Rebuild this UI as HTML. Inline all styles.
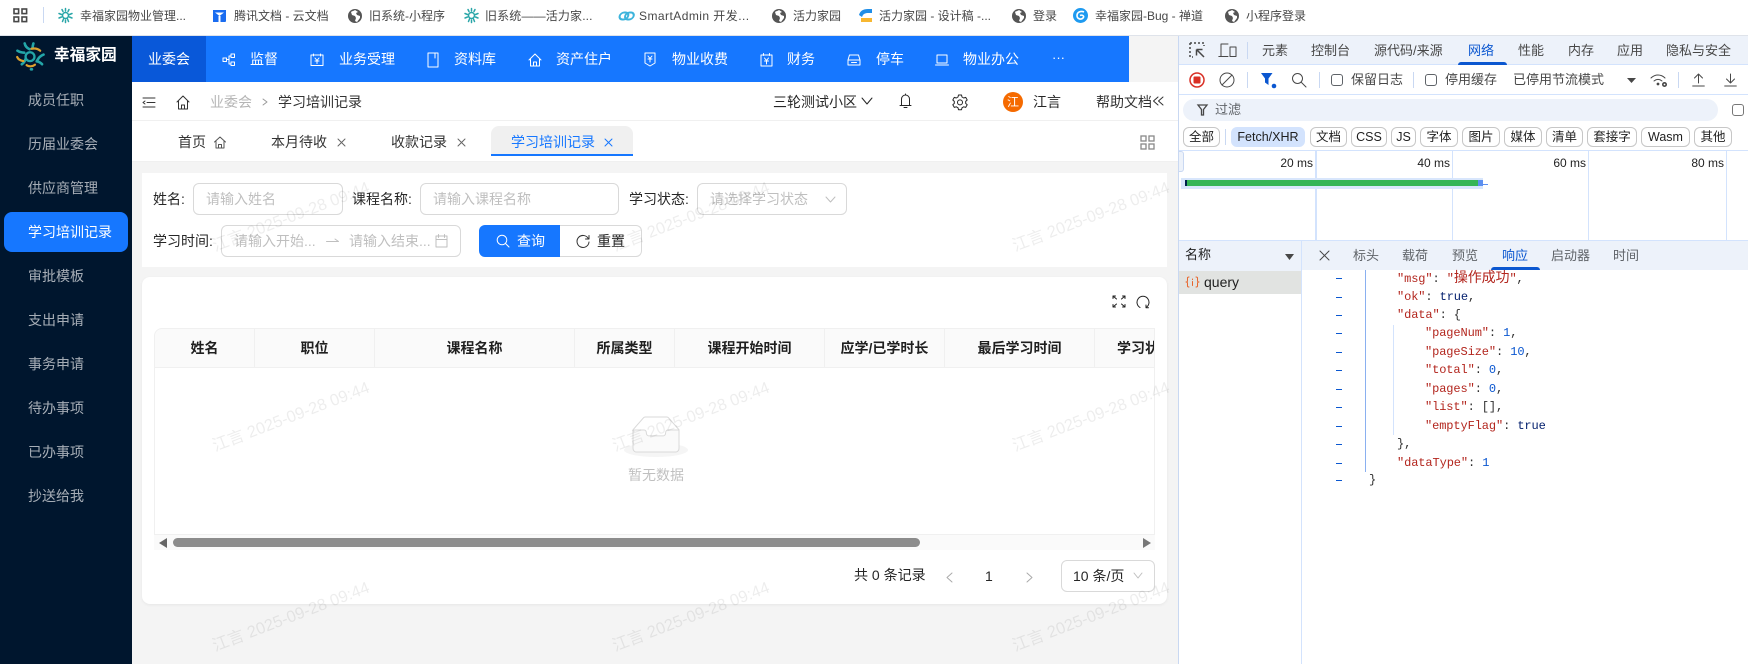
<!DOCTYPE html>
<html lang="zh-CN"><head><meta charset="utf-8"><title>学习培训记录</title>
<style>
*{box-sizing:border-box}
html,body{margin:0;padding:0;width:1748px;height:664px;overflow:hidden;background:#fff;font-family:"Liberation Sans","Noto Sans CJK SC",sans-serif;font-size:14px;color:#333}
.a{position:absolute}
.t{position:absolute;white-space:nowrap;line-height:20px;height:20px}
.b{font-size:12px;color:#474747;top:6px}
svg{position:absolute;display:block;overflow:visible}
.s{fill:none;stroke:currentColor;stroke-width:1;stroke-linecap:round;stroke-linejoin:round}
.m{color:rgba(255,255,255,.65);left:28px}
.n{color:#fff}
.in{position:absolute;height:32px;border:1px solid #d9d9d9;border-radius:6px;background:#fff}
.ph{color:#bfbfbf}
.th{position:absolute;top:0;height:39px;line-height:39px;text-align:center;font-weight:700;color:#1f1f1f;border-right:1px solid #f0f0f0;white-space:nowrap}
.wm{position:absolute;transform:translate(-50%,-50%) rotate(-21deg);font-size:16.4px;color:rgba(0,0,0,.07);white-space:nowrap;line-height:20px;pointer-events:none}
.dt{font-size:13px;color:#474747;top:41px}
.ck{position:absolute;top:74px;width:12px;height:12px;border:1px solid #5f6368;border-radius:3px;background:#fff}
.vs{position:absolute;width:1px;background:#c9d8f2}
.chip{position:absolute;top:127px;height:20px;border:1px solid #c7c7c7;border-radius:6px;text-align:center;line-height:18px;font-size:12.5px;color:#1f1f1f;white-space:nowrap}
.gl{position:absolute;top:151px;height:89px;background:#d3e3fd}
.ms{position:absolute;top:153px;font-size:12px;line-height:20px;color:#1f1f1f;white-space:nowrap;text-align:right}
.g{position:absolute;left:1336px;width:6px;height:1px;border-top:1.5px solid #0b57d0}
.c{position:absolute;font-family:"Liberation Mono","Noto Sans CJK SC",monospace;font-size:12px;letter-spacing:-.1px;line-height:18px;height:18px;white-space:pre;color:#303030}
.c i{font-style:normal;color:#b3261e}.c u{text-decoration:none;color:#0b57d0}.c b{font-weight:400;color:#001d6c}
</style></head><body>

<!-- bookmarks bar -->
<div class="a" style="left:0;top:0;width:1748px;height:36px;background:#fff;border-bottom:1px solid #dfe3ea"></div>
<svg style="left:13px;top:8px" width="15" height="15" viewBox="0 0 15 15"><g fill="none" stroke="#474747" stroke-width="1.6"><rect x="1" y="1" width="4.6" height="4.6"/><rect x="9" y="1" width="4.6" height="4.6"/><rect x="1" y="9" width="4.6" height="4.6"/><rect x="9" y="9" width="4.6" height="4.6"/></g></svg>
<div class="a" style="left:43px;top:7px;width:1px;height:16px;background:#c9d8f2"></div>

<svg style="left:58px;top:8px" width="15" height="15" viewBox="0 0 30 30"><g fill="none" stroke="#2aa6a8" stroke-width="3" stroke-linecap="round"><circle cx="15" cy="15" r="6"/><path d="M15 1v5M8 3l2 4M22 3l-2 4M2 11l5 2M28 11l-5 2M2 20l5-2M28 20l-5-2M9 27l2-5M21 27l-2-5M15 24v5"/></g></svg>
<div class="t b" style="left:80px">幸福家园物业管理...</div>

<svg style="left:212px;top:8px" width="15" height="15" viewBox="0 0 15 15"><path d="M1 2h13v11a1 1 0 0 1-1 1H1z" fill="#1a6cf0"/><path d="M3 4.500h9L7.500 8zM6.500 8h2v6h-2z" fill="#fff"/></svg>
<div class="t b" style="left:234px">腾讯文档 - 云文档</div>

<svg style="left:348px;top:9px" width="14" height="14" viewBox="0 0 14 14"><circle cx="7" cy="7" r="7" fill="#555"/><path d="M7 1c-1 1-3 1-4 2l1 3 3 1 1 2-1 3 2 1 3-4V7L9 6 8 4l2-1z" fill="#fff"/></svg>
<div class="t b" style="left:369px">旧系统-小程序</div>

<svg style="left:464px;top:8px" width="15" height="15" viewBox="0 0 30 30"><g fill="none" stroke="#2aa6a8" stroke-width="3" stroke-linecap="round"><circle cx="15" cy="15" r="6"/><path d="M15 1v5M8 3l2 4M22 3l-2 4M2 11l5 2M28 11l-5 2M2 20l5-2M28 20l-5-2M9 27l2-5M21 27l-2-5M15 24v5"/></g></svg>
<div class="t b" style="left:485px;letter-spacing:.15px">旧系统——活力家...</div>

<svg style="left:618px;top:11px" width="16" height="10" viewBox="0 0 16 10"><g fill="none" stroke="#3db4dc" stroke-width="2"><rect x="1" y="1.500" width="8.500" height="7" rx="3.500" transform="skewX(-15) translate(2 0)"/><rect x="6.500" y="1.500" width="8.500" height="7" rx="3.500" transform="skewX(-15) translate(2 0)"/></g></svg>
<div class="t b" style="left:639px;letter-spacing:.45px">SmartAdmin 开发...</div>

<svg style="left:772px;top:9px" width="14" height="14" viewBox="0 0 14 14"><circle cx="7" cy="7" r="7" fill="#555"/><path d="M7 1c-1 1-3 1-4 2l1 3 3 1 1 2-1 3 2 1 3-4V7L9 6 8 4l2-1z" fill="#fff"/></svg>
<div class="t b" style="left:793px">活力家园</div>

<svg style="left:859px;top:9px" width="13" height="13" viewBox="0 0 13 13"><path d="M0 6C1 2 4 0 9 0h4v4H9C6 4 4 5 3 8z" fill="#1f8ee8"/><path d="M2 9h11v4H2z" fill="#f7b731"/></svg>
<div class="t b" style="left:879px">活力家园 - 设计稿 -...</div>

<svg style="left:1012px;top:9px" width="14" height="14" viewBox="0 0 14 14"><circle cx="7" cy="7" r="7" fill="#555"/><path d="M7 1c-1 1-3 1-4 2l1 3 3 1 1 2-1 3 2 1 3-4V7L9 6 8 4l2-1z" fill="#fff"/></svg>
<div class="t b" style="left:1033px">登录</div>

<svg style="left:1073px;top:8px" width="15" height="15" viewBox="0 0 15 15"><circle cx="7.500" cy="7.500" r="7.500" fill="#1e9af0"/><path d="M11 4C8 2.500 4 4 4 7.500S8 12 10 10 9 6.500 7 7.500" fill="none" stroke="#fff" stroke-width="1.600"/></svg>
<div class="t b" style="left:1095px">幸福家园-Bug - 禅道</div>

<svg style="left:1225px;top:9px" width="14" height="14" viewBox="0 0 14 14"><circle cx="7" cy="7" r="7" fill="#555"/><path d="M7 1c-1 1-3 1-4 2l1 3 3 1 1 2-1 3 2 1 3-4V7L9 6 8 4l2-1z" fill="#fff"/></svg>
<div class="t b" style="left:1246px">小程序登录</div>

<!-- page background -->
<div class="a" style="left:132px;top:36px;width:1046px;height:628px;background:#f4f4f4"></div>

<!-- sidebar -->
<div class="a" style="left:0;top:36px;width:132px;height:628px;background:#00162e"></div>
<svg style="left:16px;top:42px" width="29" height="29" viewBox="0 0 30 30"><g fill="none" stroke-linecap="round"><circle cx="14.500" cy="15.200" r="4.600" stroke="#23a6a8" stroke-width="2.400"/><path d="M9 1.500c.5 2.500 2 4.500 5 6M18 1.500c-.5 1.500-.8 3-.8 4.500M1.500 9c2 1.300 4.500 2 7 2M28.500 13c-2.500 1-5 3-6.500 6M6 23c1.500-1 3-2.500 3.600-5M27 23c-1.500-1.500-3.500-2.800-5.600-3M15.500 28.200h1" stroke="#23a6a8" stroke-width="2.700"/><path d="M16 7c3.500-.7 6.800 0 9 2M1.200 15.500c1 2.200 3.500 3.800 6.400 4.200M11 24c2.500 1.700 6 1.500 8.600-.5" stroke="#dca12f" stroke-width="2.300"/></g></svg>
<div class="t" style="left:54px;top:46px;font-size:15.700px;font-weight:700;color:#fff">幸福家园</div>
<div class="a" style="left:4px;top:212px;width:124px;height:40px;background:#1677ff;border-radius:8px"></div>
<div class="t m" style="top:90px">成员任职</div>
<div class="t m" style="top:134px">历届业委会</div>
<div class="t m" style="top:178px">供应商管理</div>
<div class="t m" style="top:222px;color:#fff">学习培训记录</div>
<div class="t m" style="top:266px">审批模板</div>
<div class="t m" style="top:310px">支出申请</div>
<div class="t m" style="top:354px">事务申请</div>
<div class="t m" style="top:398px">待办事项</div>
<div class="t m" style="top:442px">已办事项</div>
<div class="t m" style="top:486px">抄送给我</div>

<!-- top nav -->
<div class="a" style="left:132px;top:36px;width:997px;height:46px;background:#1677ff"></div>
<div class="a" style="left:132px;top:36px;width:74px;height:46px;background:#0958d9"></div>
<div class="t n" style="left:148px;top:49px">业委会</div>
<svg style="left:222px;top:53px;color:#fff" width="14" height="14" viewBox="0 0 14 14"><g class="s"><rect x="1" y="5" width="3.500" height="3.500"/><rect x="9" y="1" width="3.500" height="3.500"/><rect x="9" y="9" width="3.500" height="3.500"/><path d="M4.500 6.500H7V3h2M7 6.500V11h2"/></g></svg>
<div class="t n" style="left:250px;top:49px">监督</div>
<svg style="left:310px;top:53px;color:#fff" width="14" height="14" viewBox="0 0 14 14"><g class="s"><path d="M1 2h12v10.500H1zM3.500 1v2M10.500 1v2M5 5l2 2.500L9 5M5 8h4M7 7.500v3"/></g></svg>
<div class="t n" style="left:339px;top:49px">业务受理</div>
<svg style="left:427px;top:52px;color:#fff" width="12" height="16" viewBox="0 0 12 16"><g class="s"><path d="M1 1h10v14H1zM8 1v5"/></g></svg>
<div class="t n" style="left:454px;top:49px">资料库</div>
<svg style="left:528px;top:53px;color:#fff" width="14" height="14" viewBox="0 0 14 14"><g class="s"><path d="M1 7l6-6 6 6M2.500 6v7h9V6M5.500 13V9h3v4"/></g></svg>
<div class="t n" style="left:556px;top:49px">资产住户</div>
<svg style="left:644px;top:52px;color:#fff" width="12" height="15" viewBox="0 0 12 15"><g class="s"><path d="M1 1h10v10l-5 3-5-3zM4 4l2 2.500L8 4M4 7h4M6 6.500V10"/></g></svg>
<div class="t n" style="left:672px;top:49px">物业收费</div>
<svg style="left:760px;top:53px;color:#fff" width="13" height="14" viewBox="0 0 13 14"><g class="s"><path d="M1 2h11v11H1zM3.500 .5v2M9.500 .5v2M4.500 5l2 2.500 2-2.500M4.500 8h4M6.500 7.500V11"/></g></svg>
<div class="t n" style="left:787px;top:49px">财务</div>
<svg style="left:847px;top:54px;color:#fff" width="14" height="12" viewBox="0 0 14 12"><g class="s"><path d="M1 6l1.500-5h9L13 6v5H1zM1 6h12M4.500 8.500h5"/></g></svg>
<div class="t n" style="left:876px;top:49px">停车</div>
<svg style="left:935px;top:54px;color:#fff" width="14" height="12" viewBox="0 0 14 12"><g class="s"><path d="M2 1h10v8H2zM.5 11h13"/></g></svg>
<div class="t n" style="left:963px;top:49px">物业办公</div>
<div class="t n" style="left:1052px;top:48px;font-size:13px">···</div>

<!-- breadcrumb header -->
<div class="a" style="left:132px;top:82px;width:1046px;height:39px;background:#fff;border-bottom:1px solid #f0f0f0"></div>
<svg style="left:142px;top:97px;color:#333" width="14" height="11" viewBox="0 0 14 11"><g class="s" stroke-width="1.300"><path d="M1 1h12M5 5.500h8M1 10h12M3 4L1 5.500 3 7"/></g></svg>
<svg style="left:176px;top:95px;color:#333" width="14" height="15" viewBox="0 0 14 15"><g class="s" stroke-width="1.200"><path d="M1 7l6-6 6 6M2.500 6v8h9V6M5.500 14v-4h3v4"/></g></svg>
<div class="t" style="left:210px;top:92px;color:#b5b5b5">业委会</div>
<svg style="left:262px;top:98px;color:#999" width="6" height="8" viewBox="0 0 6 8"><path class="s" d="M1 1l4 3-4 3"/></svg>
<div class="t" style="left:278px;top:92px;color:#333">学习培训记录</div>
<div class="t" style="left:773px;top:92px;color:#262626">三轮测试小区</div>
<svg style="left:861px;top:97px;color:#262626" width="12" height="8" viewBox="0 0 12 8"><path class="s" d="M1 1l5 6 5-6"/></svg>
<svg style="left:899px;top:93px;color:#262626" width="13" height="16" viewBox="0 0 13 16"><g class="s" stroke-width="1.200"><path d="M1 12.500h11M2.500 12.500V6a4 4 0 0 1 8 0v6.500M6.500 1v1M5 14.500h3"/></g></svg>
<svg style="left:952px;top:94px;color:#262626" width="16" height="16" viewBox="0 0 16 16"><g class="s" stroke-width="1.100"><path d="M6.500 1h3l.5 2 1.700 1 2-.6 1.500 2.600-1.500 1.400v2l1.500 1.400-1.500 2.600-2-.6-1.700 1-.5 2h-3l-.5-2-1.700-1-2 .6L.8 10.800 2.300 9.400v-2L.8 6l1.500-2.600 2 .6L6 3z"/><circle cx="8" cy="8.400" r="2.500"/></g></svg>
<div class="a" style="left:1003px;top:92px;width:20px;height:20px;border-radius:50%;background:#f56a00;color:#fff;font-size:12px;line-height:20px;text-align:center">江</div>
<div class="t" style="left:1033px;top:92px;color:#262626">江言</div>
<div class="t" style="left:1096px;top:92px;color:#333">帮助文档</div>
<svg style="left:1152px;top:96px;color:#333" width="12" height="10" viewBox="0 0 12 10"><path class="s" d="M6 1L1.500 5 6 9M11 1L6.500 5 11 9"/></svg>

<!-- tabs -->
<div class="a" style="left:132px;top:121px;width:1046px;height:41px;background:#fff;border-bottom:1px solid #f0f0f0"></div>
<div class="t" style="left:178px;top:132px">首页</div>
<svg style="left:214px;top:136px;color:#555" width="12" height="13" viewBox="0 0 12 13"><g class="s"><path d="M.5 6L6 1l5.500 5M2 5.500V12h8V5.500M4.500 12V8.500h3V12"/></g></svg>
<div class="t" style="left:271px;top:132px">本月待收</div>
<svg style="left:337px;top:138px;color:#666" width="9" height="9" viewBox="0 0 9 9"><path class="s" d="M1 1l7 7M8 1L1 8"/></svg>
<div class="t" style="left:391px;top:132px">收款记录</div>
<svg style="left:457px;top:138px;color:#666" width="9" height="9" viewBox="0 0 9 9"><path class="s" d="M1 1l7 7M8 1L1 8"/></svg>
<div class="a" style="left:491px;top:126px;width:142px;height:30px;background:#f0f0f0;border-radius:8px 8px 0 0;border-bottom:2px solid #1677ff"></div>
<div class="t" style="left:511px;top:132px;color:#1677ff">学习培训记录</div>
<svg style="left:604px;top:138px;color:#1677ff" width="9" height="9" viewBox="0 0 9 9"><path class="s" d="M1 1l7 7M8 1L1 8"/></svg>
<svg style="left:1140px;top:135px" width="15" height="15" viewBox="0 0 15 15"><g fill="none" stroke="#888" stroke-width="1.300"><rect x="1" y="1" width="5" height="5"/><rect x="9" y="1" width="5" height="5"/><rect x="1" y="9" width="5" height="5"/><rect x="9" y="9" width="5" height="5"/></g></svg>

<!-- filter card -->
<div class="a" style="left:142px;top:173px;width:1025px;height:94px;background:#fff"></div>
<div class="t" style="left:153px;top:189px;color:#262626">姓名:</div>
<div class="in" style="left:193px;top:183px;width:150px"></div>
<div class="t ph" style="left:206px;top:189px">请输入姓名</div>
<div class="t" style="left:352px;top:189px;color:#262626">课程名称:</div>
<div class="in" style="left:420px;top:183px;width:199px"></div>
<div class="t ph" style="left:433px;top:189px">请输入课程名称</div>
<div class="t" style="left:629px;top:189px;color:#262626">学习状态:</div>
<div class="in" style="left:697px;top:183px;width:150px"></div>
<div class="t ph" style="left:710px;top:189px">请选择学习状态</div>
<svg style="left:825px;top:196px;color:#bfbfbf" width="11" height="7" viewBox="0 0 11 7"><path class="s" d="M1 1l4.500 5L10 1"/></svg>

<div class="t" style="left:153px;top:231px;color:#262626">学习时间:</div>
<div class="in" style="left:221px;top:225px;width:240px"></div>
<div class="t ph" style="left:234px;top:231px">请输入开始...</div>
<svg style="left:326px;top:238px;color:#bfbfbf" width="13" height="6" viewBox="0 0 13 6"><path class="s" d="M.5 3.500h12L9 1"/></svg>
<div class="t ph" style="left:349px;top:231px">请输入结束...</div>
<svg style="left:435px;top:234px;color:#bfbfbf" width="13" height="14" viewBox="0 0 13 14"><g class="s"><path d="M1 2h11v11H1zM1 5.500h11M3.500 .5v3M9.500 .5v3"/></g></svg>
<div class="a" style="left:479px;top:225px;width:81px;height:32px;background:#1677ff;border-radius:6px 0 0 6px"></div>
<svg style="left:496px;top:234px;color:#fff" width="14" height="14" viewBox="0 0 14 14"><g class="s" stroke-width="1.200"><circle cx="6" cy="6" r="4.800"/><path d="M9.500 9.500L13 13"/></g></svg>
<div class="t n" style="left:517px;top:231px">查询</div>
<div class="a" style="left:560px;top:225px;width:82px;height:32px;background:#fff;border:1px solid #d9d9d9;border-left:0;border-radius:0 6px 6px 0"></div>
<svg style="left:576px;top:234px;color:#333" width="14" height="14" viewBox="0 0 14 14"><g class="s" stroke-width="1.300"><path d="M12.500 5A6 6 0 1 0 13 8M13 1.500V5H9.500"/></g></svg>
<div class="t" style="left:597px;top:231px;color:#262626">重置</div>

<!-- table card -->
<div class="a" style="left:142px;top:277px;width:1025px;height:327px;background:#fff;border-radius:8px;box-shadow:0 1px 3px rgba(0,0,0,.06)"></div>
<svg style="left:1112px;top:295px;color:#222" width="14" height="13" viewBox="0 0 14 13"><g class="s" stroke-width="1.200"><path d="M1 1l3.500 3M1 1h2.500M1 1v2.500M13 1L9.500 4M13 1h-2.500M13 1v2.500M1 12l3.500-3M1 12h2.500M1 12V9.500M13 12L9.500 9M13 12h-2.500M13 12V9.500"/></g></svg>
<svg style="left:1136px;top:295px;color:#222" width="14" height="14" viewBox="0 0 14 14"><g class="s" stroke-width="1.300"><path d="M4 12.500A6 6 0 1 1 10 12.500M10 10v2.700h2.500"/></g></svg>

<div class="a" style="left:154px;top:328px;width:1001px;height:40px;overflow:hidden;background:#fafafa;border-radius:8px 0 0 0;border:1px solid #f0f0f0;border-right:0">
<div class="th" style="left:0;width:100px">姓名</div>
<div class="th" style="left:100px;width:120px">职位</div>
<div class="th" style="left:220px;width:200px">课程名称</div>
<div class="th" style="left:420px;width:100px">所属类型</div>
<div class="th" style="left:520px;width:150px">课程开始时间</div>
<div class="th" style="left:670px;width:120px">应学/已学时长</div>
<div class="th" style="left:790px;width:150px">最后学习时间</div>
<div class="th" style="left:940px;width:100px;border:0">学习状态</div>
</div>
<div class="a" style="left:154px;top:368px;width:1px;height:182px;background:#f0f0f0"></div>
<div class="a" style="left:1154px;top:328px;width:1px;height:222px;background:#f0f0f0"></div>
<div class="a" style="left:154px;top:534px;width:1001px;height:16px;background:#fafafa;border-top:1px solid #f0f0f0"></div>
<svg style="left:159px;top:538px" width="8" height="10" viewBox="0 0 8 10"><path d="M8 0v10L0 5z" fill="#666"/></svg>
<div class="a" style="left:173px;top:538px;width:747px;height:9px;background:#8c8c8c;border-radius:5px"></div>
<svg style="left:1143px;top:538px" width="8" height="10" viewBox="0 0 8 10"><path d="M0 0v10l8-5z" fill="#777"/></svg>

<svg style="left:624px;top:416px" width="64" height="41" viewBox="0 0 64 41"><g transform="translate(0 1)" fill="none" fill-rule="evenodd"><ellipse fill="#f5f5f5" cx="32" cy="33" rx="32" ry="7"/><g fill-rule="nonzero" stroke="#d9d9d9"><path d="M55 12.760L44.854 1.258C44.367.474 43.656 0 42.907 0H21.093c-.749 0-1.460.474-1.947 1.257L9 12.761V22h46v-9.240z"/><path d="M41.613 15.931c0-1.605.994-2.930 2.227-2.931H55v18.137C55 33.260 53.680 35 52.050 35h-40.100C10.320 35 9 33.259 9 31.137V13h11.160c1.233 0 2.227 1.323 2.227 2.928v.022c0 1.605 1.005 2.901 2.237 2.901h14.752c1.232 0 2.237-1.308 2.237-2.913v-.007z" fill="#fafafa"/></g></g></svg>
<div class="t" style="left:628px;top:465px;color:rgba(0,0,0,.25)">暂无数据</div>

<div class="t" style="left:854px;top:565px;color:#262626">共 0 条记录</div>
<svg style="left:946px;top:572px;color:#aaa" width="7" height="11" viewBox="0 0 7 11"><path class="s" d="M6 1L1 5.500 6 10"/></svg>
<div class="t" style="left:985px;top:566px;color:#262626">1</div>
<svg style="left:1026px;top:572px;color:#aaa" width="7" height="11" viewBox="0 0 7 11"><path class="s" d="M1 1l5 4.500L1 10"/></svg>
<div class="in" style="left:1061px;top:560px;width:94px"></div>
<div class="t" style="left:1073px;top:566px;color:#262626">10 条/页</div>
<svg style="left:1133px;top:572px;color:#bfbfbf" width="10" height="7" viewBox="0 0 10 7"><path class="s" d="M1 1l4 5 4-5"/></svg>

<!-- watermarks -->
<div class="wm" style="left:291px;top:217px">江言 2025-09-28 09:44</div>
<div class="wm" style="left:691px;top:217px">江言 2025-09-28 09:44</div>
<div class="wm" style="left:1091px;top:217px">江言 2025-09-28 09:44</div>
<div class="wm" style="left:291px;top:417px">江言 2025-09-28 09:44</div>
<div class="wm" style="left:691px;top:417px">江言 2025-09-28 09:44</div>
<div class="wm" style="left:1091px;top:417px">江言 2025-09-28 09:44</div>
<div class="wm" style="left:291px;top:617px">江言 2025-09-28 09:44</div>
<div class="wm" style="left:691px;top:617px">江言 2025-09-28 09:44</div>
<div class="wm" style="left:1091px;top:617px">江言 2025-09-28 09:44</div>

<!-- devtools -->
<div class="a" style="left:1178px;top:36px;width:570px;height:628px;background:#fff;border-left:1px solid #c9d8f2"></div>
<div class="a" style="left:1179px;top:36px;width:569px;height:29px;background:#edf2fa;border-bottom:1px solid #d3e3fd"></div>
<svg style="left:1189px;top:42px;color:#474747" width="17" height="17" viewBox="0 0 17 17"><g fill="none" stroke="#474747" stroke-width="1.500"><path d="M1 1h14v3M1 1v14h3M15 1" stroke-dasharray="2 2"/><path d="M7.500 7.500L15 15M7.500 7.500h6M7.500 7.500v6"/></g></svg>
<svg style="left:1218px;top:43px;color:#474747" width="19" height="15" viewBox="0 0 19 15"><g class="s" stroke-width="1.400"><path d="M10 1H3v12M0.800 13.500h9.200"/><rect x="12" y="4" width="6" height="9.500"/></g></svg>
<div class="vs" style="left:1247px;top:42px;height:17px"></div>
<div class="t dt" style="left:1262px">元素</div>
<div class="t dt" style="left:1311px">控制台</div>
<div class="t dt" style="left:1374px">源代码/来源</div>
<div class="t dt" style="left:1468px;color:#0b57d0">网络</div>
<div class="a" style="left:1458px;top:62px;width:49px;height:3px;background:#0b57d0;border-radius:3px 3px 0 0"></div>
<div class="t dt" style="left:1518px">性能</div>
<div class="t dt" style="left:1568px">内存</div>
<div class="t dt" style="left:1617px">应用</div>
<div class="t dt" style="left:1666px">隐私与安全</div>

<!-- network toolbar -->
<div class="a" style="left:1179px;top:94px;width:569px;height:1px;background:#d3e3fd"></div>
<svg style="left:1189px;top:72px" width="16" height="16" viewBox="0 0 16 16"><circle cx="8" cy="8" r="7" fill="#fff" stroke="#d93025" stroke-width="1.500"/><rect x="4.500" y="4.500" width="7" height="7" rx="1" fill="#d93025"/></svg>
<svg style="left:1219px;top:72px;color:#474747" width="16" height="16" viewBox="0 0 16 16"><g class="s" stroke-width="1.500"><circle cx="8" cy="8" r="7"/><path d="M3 13L13 3"/></g></svg>
<div class="vs" style="left:1247px;top:72px;height:16px"></div>
<svg style="left:1261px;top:73px" width="16" height="16" viewBox="0 0 16 16"><path d="M0 0h11.500L7.500 5.500V12L4 9.500V5.500z" fill="#0b57d0"/><circle cx="13" cy="13" r="2.300" fill="#0b57d0"/></svg>
<svg style="left:1291px;top:72px;color:#474747" width="16" height="16" viewBox="0 0 16 16"><g class="s" stroke-width="1.500"><circle cx="6.500" cy="6.500" r="5"/><path d="M10.500 10.500L15 15"/></g></svg>
<div class="vs" style="left:1319px;top:72px;height:16px"></div>
<div class="ck" style="left:1331px"></div>
<div class="t dt" style="left:1351px;top:70px">保留日志</div>
<div class="vs" style="left:1413px;top:72px;height:16px"></div>
<div class="ck" style="left:1425px"></div>
<div class="t dt" style="left:1445px;top:70px">停用缓存</div>
<div class="t dt" style="left:1513px;top:70px">已停用节流模式</div>
<svg style="left:1627px;top:78px" width="9" height="5" viewBox="0 0 9 5"><path d="M0 0h9L4.500 5z" fill="#474747"/></svg>
<svg style="left:1650px;top:73px;color:#474747" width="18" height="15" viewBox="0 0 18 15"><g class="s" stroke-width="1.300"><path d="M1 5c4-4 10-4 14 0M4 8c2.500-2 5.500-2 8 0"/></g><circle cx="8" cy="11" r="1.400" fill="#474747"/><circle cx="14.500" cy="11.500" r="2.500" fill="#474747"/><circle cx="14.500" cy="11.500" r=".9" fill="#fff"/></svg>
<div class="vs" style="left:1678px;top:72px;height:16px"></div>
<svg style="left:1692px;top:73px;color:#474747" width="13" height="14" viewBox="0 0 13 14"><g class="s" stroke-width="1.400"><path d="M6.500 10V1M2.500 5l4-4 4 4M.7 13h11.600"/></g></svg>
<svg style="left:1724px;top:73px;color:#474747" width="13" height="14" viewBox="0 0 13 14"><g class="s" stroke-width="1.400"><path d="M6.500 1v9M2.500 6l4 4 4-4M.7 13h11.600"/></g></svg>

<!-- filter -->
<div class="a" style="left:1183px;top:99px;width:535px;height:22px;background:#edf2fa;border-radius:11px"></div>
<svg style="left:1197px;top:104px" width="11" height="12" viewBox="0 0 11 12"><path d="M1 1h9L6.500 5.500V11H4.500V5.500z" fill="none" stroke="#474747" stroke-width="1.300"/></svg>
<div class="t" style="left:1215px;top:100px;font-size:13px;color:#5f6368">过滤</div>
<div class="ck" style="left:1732px;top:104px;border-color:#777"></div>

<!-- chips -->
<div class="chip" style="left:1183px;width:37px">全部</div>
<div class="vs" style="left:1225px;top:129px;height:16px"></div>
<div class="chip" style="left:1231px;width:74px;background:#d3e3fd;border-color:#d3e3fd">Fetch/XHR</div>
<div class="chip" style="left:1310px;width:37px">文档</div>
<div class="chip" style="left:1351px;width:36px">CSS</div>
<div class="chip" style="left:1391px;width:25px">JS</div>
<div class="chip" style="left:1420px;width:38px">字体</div>
<div class="chip" style="left:1462px;width:38px">图片</div>
<div class="chip" style="left:1504px;width:38px">媒体</div>
<div class="chip" style="left:1546px;width:37px">清单</div>
<div class="chip" style="left:1587px;width:50px">套接字</div>
<div class="chip" style="left:1641px;width:49px">Wasm</div>
<div class="chip" style="left:1694px;width:38px">其他</div>

<!-- overview -->
<div class="a" style="left:1179px;top:150px;width:569px;height:1px;background:#d3e3fd"></div>
<div class="a" style="left:1179px;top:240px;width:569px;height:1px;background:#d3e3fd"></div>
<div class="gl" style="left:1315px;width:2px"></div>
<div class="gl" style="left:1452px;width:1px"></div>
<div class="gl" style="left:1588px;width:1px"></div>
<div class="gl" style="left:1726px;width:1px"></div>
<div class="a" style="left:1179px;top:151px;width:5px;height:21px;background:#edf2fa;border:1px solid #c9d8f2;border-left:0;border-radius:0 3px 3px 0"></div>
<div class="ms" style="right:435px">20 ms</div>
<div class="ms" style="right:298px">40 ms</div>
<div class="ms" style="right:162px">60 ms</div>
<div class="ms" style="right:24px">80 ms</div>
<div class="a" style="left:1181px;top:178px;width:302px;height:11px;background:#d8e6fc"></div>
<div class="a" style="left:1185px;top:180px;width:2px;height:6px;background:#00224d"></div>
<div class="a" style="left:1187px;top:180px;width:291px;height:6px;background:#34b556"></div>
<div class="a" style="left:1478px;top:180px;width:5px;height:6px;background:#5c8ff0"></div>
<div class="a" style="left:1483px;top:184px;width:5px;height:1px;background:#5c8ff0"></div>

<!-- bottom panels -->
<div class="a" style="left:1179px;top:241px;width:122px;height:30px;background:#edf2fa"></div>
<div class="a" style="left:1179px;top:271px;width:122px;height:23px;background:#e1e3e1"></div>
<div class="a" style="left:1302px;top:241px;width:446px;height:29px;background:#edf2fa"></div>
<div class="a" style="left:1301px;top:241px;width:1px;height:423px;background:#d3e3fd"></div>
<div class="t" style="left:1185px;top:245px;font-size:13px;color:#1f1f1f">名称</div>
<svg style="left:1285px;top:254px" width="9" height="6" viewBox="0 0 9 6"><path d="M0 0h9L4.500 6z" fill="#474747"/></svg>
<svg style="left:1185px;top:276px;color:#e8642a" width="15" height="12" viewBox="0 0 15 12"><g class="s" stroke-width="1.400"><path d="M4 1C2 1 2.500 2 2.500 4S2 6 1 6c1 0 1.500 0 1.500 2S2 11 4 11M11 1c2 0 1.500 1 1.500 3s.5 2 1.500 2c-1 0-1.500 0-1.500 2s.5 3-1.500 3M7.500 3v.6M7.500 5.500V9.500"/></g></svg>
<div class="t" style="left:1204px;top:272px;color:#1f1f1f">query</div>
<svg style="left:1319px;top:250px;color:#474747" width="11" height="11" viewBox="0 0 11 11"><path class="s" stroke-width="1.500" d="M1 1l9 9M10 1L1 10"/></svg>
<div class="t dt" style="left:1353px;top:246px;color:#5f6368">标头</div>
<div class="t dt" style="left:1402px;top:246px;color:#5f6368">载荷</div>
<div class="t dt" style="left:1452px;top:246px;color:#5f6368">预览</div>
<div class="t dt" style="left:1502px;top:246px;color:#0b57d0">响应</div>
<div class="a" style="left:1491px;top:267px;width:49px;height:3px;background:#0b57d0;border-radius:3px 3px 0 0"></div>
<div class="t dt" style="left:1551px;top:246px;color:#5f6368">启动器</div>
<div class="t dt" style="left:1613px;top:246px;color:#5f6368">时间</div>

<!-- response -->
<div class="a" style="left:1365px;top:270px;width:1px;height:202px;background:#8ab0f0"></div>
<div class="a" style="left:1393px;top:325px;width:1px;height:110px;background:#d3e3fd"></div>
<div class="g" style="top:278px"></div><div class="g" style="top:297px"></div><div class="g" style="top:315px"></div><div class="g" style="top:333px"></div><div class="g" style="top:352px"></div><div class="g" style="top:370px"></div><div class="g" style="top:389px"></div><div class="g" style="top:407px"></div><div class="g" style="top:426px"></div><div class="g" style="top:444px"></div><div class="g" style="top:463px"></div><div class="g" style="top:480px"></div>
<div class="c" style="left:1397px;top:270px"><i>"msg"</i>: <i>"<span style="font-size:14px">操作成功</span>"</i>,</div>
<div class="c" style="left:1397px;top:288px"><i>"ok"</i>: <b>true</b>,</div>
<div class="c" style="left:1397px;top:306px"><i>"data"</i>: {</div>
<div class="c" style="left:1425px;top:324px"><i>"pageNum"</i>: <u>1</u>,</div>
<div class="c" style="left:1425px;top:343px"><i>"pageSize"</i>: <u>10</u>,</div>
<div class="c" style="left:1425px;top:361px"><i>"total"</i>: <u>0</u>,</div>
<div class="c" style="left:1425px;top:380px"><i>"pages"</i>: <u>0</u>,</div>
<div class="c" style="left:1425px;top:398px"><i>"list"</i>: [],</div>
<div class="c" style="left:1425px;top:417px"><i>"emptyFlag"</i>: <b>true</b></div>
<div class="c" style="left:1397px;top:435px">},</div>
<div class="c" style="left:1397px;top:454px"><i>"dataType"</i>: <u>1</u></div>
<div class="c" style="left:1369px;top:471px">}</div>
</body></html>
